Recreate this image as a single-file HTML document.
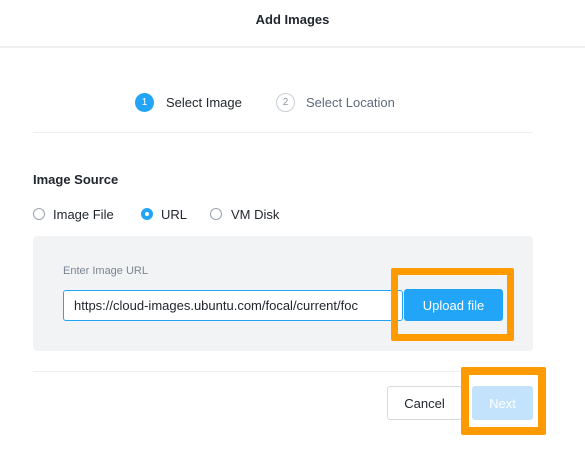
<!DOCTYPE html>
<html><head><style>
*{box-sizing:border-box;margin:0;padding:0}
body{width:585px;height:469px;background:#fff;font-family:"Liberation Sans",sans-serif;position:relative;overflow:hidden;color:#22272e}
.a{position:absolute}
</style></head><body>
<div class="a" style="left:0;top:0;width:585px;height:48px;border-bottom:2px solid #eef0f2"></div>
<div class="a" style="left:0;width:585px;top:12px;text-align:center;font-size:13px;font-weight:bold;color:#22272e">Add Images</div>

<div class="a" style="left:135px;top:93px;width:19px;height:19px;border-radius:50%;background:#22a5f7;color:#fff;font-size:10px;text-align:center;line-height:19px">1</div>
<div class="a" style="left:166px;top:95px;font-size:13px;color:#22272e">Select Image</div>
<div class="a" style="left:276px;top:93px;width:19px;height:19px;border-radius:50%;border:1px solid #c9cfd6;color:#8a95a3;font-size:10px;text-align:center;line-height:17px">2</div>
<div class="a" style="left:306px;top:95px;font-size:13px;color:#5e6b7b">Select Location</div>
<div class="a" style="left:33px;top:132px;width:500px;height:1px;background:#eceef0"></div>

<div class="a" style="left:33px;top:172px;font-size:13px;font-weight:bold;color:#22272e">Image Source</div>
<div class="a" style="left:33px;top:208px;width:12px;height:12px;border-radius:50%;border:1px solid #9aa3ad"></div>
<div class="a" style="left:53px;top:207px;font-size:13px">Image File</div>
<div class="a" style="left:141px;top:208px;width:12px;height:12px;border-radius:50%;border:4px solid #22a5f7;background:#fff"></div>
<div class="a" style="left:161px;top:207px;font-size:13px">URL</div>
<div class="a" style="left:210px;top:208px;width:12px;height:12px;border-radius:50%;border:1px solid #9aa3ad"></div>
<div class="a" style="left:231px;top:207px;font-size:13px">VM Disk</div>

<div class="a" style="left:33px;top:236px;width:500px;height:115px;background:#f2f3f5;border-radius:4px"></div>
<div class="a" style="left:63px;top:265px;font-size:11px;color:#7a8593">Enter Image URL</div>
<div class="a" style="left:63px;top:290px;width:340px;height:31px;background:#fff;border:1px solid #22a5f7;border-radius:3px;font-size:13px;line-height:30px;padding-left:10px;white-space:nowrap;overflow:hidden">https://cloud-images.ubuntu.com/focal/current/foc</div>
<div class="a" style="left:391px;top:268px;width:123px;height:73px;border:7px solid #ff9a00;border-radius:2px"></div>
<div class="a" style="left:404px;top:289px;width:99px;height:32px;background:#22a5f7;border-radius:3px;color:#fff;font-size:13px;text-align:center;line-height:33px">Upload file</div>

<div class="a" style="left:33px;top:371px;width:500px;height:1px;background:#eceef0"></div>
<div class="a" style="left:387px;top:386px;width:75px;height:34px;border:1px solid #d6dade;border-radius:3px;font-size:13px;text-align:center;line-height:33px">Cancel</div>
<div class="a" style="left:461px;top:367px;width:85px;height:68px;border:8px solid #ff9a00;border-radius:2px"></div>
<div class="a" style="left:472px;top:386px;width:61px;height:34px;background:#c2e3fb;border-radius:3px;color:#fff;font-size:13px;text-align:center;line-height:35px">Next</div>
</body></html>
